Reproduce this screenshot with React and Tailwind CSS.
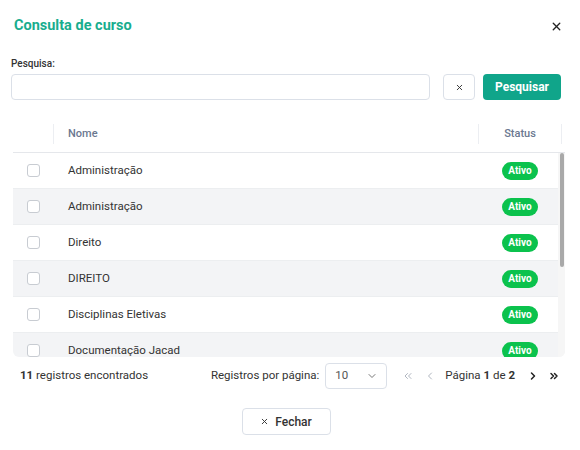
import React from "react";
import { X, ChevronDown, ChevronLeft, ChevronRight, ChevronsLeft, ChevronsRight } from "lucide-react";

const cursos = [
  "Administração",
  "Administração",
  "Direito",
  "DIREITO",
  "Disciplinas Eletivas",
  "Documentação Jacad",
];

const App = () => {
  return (
    <div className="w-[580px] h-[450px] bg-white font-['Roboto',sans-serif] text-[#333]">
      {/* Header */}
      <div className="flex items-center justify-between h-[20px] mt-[16px] pl-[14px] pr-[17px]">
        <h1 className="text-[14.5px] font-bold text-[#18ad8e] leading-[20px]">Consulta de curso</h1>
        <X className="w-[13px] h-[13px] text-[#222]" strokeWidth={2.5} />
      </div>

      {/* Search */}
      <div className="pl-[11px] pr-[19px] mt-[22px]">
        <label className="block text-[10px] leading-[12px] font-medium text-[#333]">Pesquisa:</label>
        <div className="flex items-center mt-[4px] gap-[8px]">
          <input className="flex-1 h-[26px] border border-[#dbe0e8] rounded-[4px] outline-none mr-[5px]" />
          <button className="w-[32px] h-[26px] border border-[#dbe0e8] rounded-[4px] flex items-center justify-center">
            <X className="w-[9px] h-[9px] text-[#333]" strokeWidth={2.5} />
          </button>
          <button className="w-[78px] h-[26px] bg-[#10a58a] rounded-[4px] text-white text-[12px] font-bold">
            Pesquisar
          </button>
        </div>
      </div>

      {/* Table */}
      <div className="mx-[13px] mt-[16px] w-[552px]">
        <div className="flex h-[37px] border-b border-[#e5e7eb] text-[11px] font-medium text-[#6b7890]">
          <div className="w-[41px] flex items-center justify-end">
            <div className="w-px h-[20px] bg-[#eceef2]" />
          </div>
          <div className="flex-1 flex items-center pl-[14px]">Nome</div>
          <div className="w-px h-[20px] bg-[#eceef2] self-center" />
          <div className="w-[82px] flex items-center justify-center">Status</div>
          <div className="w-px h-[20px] bg-[#eceef2] self-center" />
          <div className="w-[3px]" />
        </div>

        <div className="relative h-[204px] overflow-hidden rounded-b-[6px]">
          {cursos.map((nome, i) => (
            <div
              key={i}
              className={`flex h-[36px] items-center border-b border-[#eceef0] pr-[7px] ${
                i % 2 === 1 ? "bg-[#f3f4f6]" : "bg-white"
              }`}
            >
              <div className="w-[41px] flex justify-center">
                <div className="w-[13px] h-[13px] border border-[#c8ccd2] rounded-[3px] bg-white" />
              </div>
              <div className="flex-1 pl-[14px] text-[11.5px] text-[#333]">{nome}</div>
              <div className="w-[76px] flex justify-center">
                <span className="h-[18px] px-[6px] rounded-full bg-[#0bc24d] text-white text-[10px] font-bold leading-[18px]">
                  Ativo
                </span>
              </div>
            </div>
          ))}
          {/* scrollbar */}
          <div className="absolute right-0 top-0 w-[7px] h-full bg-[#f6f6f6]">
            <div className="mx-auto w-[4px] h-[114px] rounded-full bg-[#a9a9a9]" />
          </div>
        </div>
      </div>

      {/* Pagination */}
      <div className="flex items-center h-[26px] mt-[6px] pl-[20px] pr-[20px] text-[11.5px] text-[#333]">
        <span>
          <b className="font-bold">11</b> registros encontrados
        </span>
        <span className="ml-auto">Registros por página:</span>
        <div className="ml-[6px] w-[62px] h-[26px] border border-[#dbe0e8] rounded-[4px] flex items-center justify-between pl-[9px] pr-[8px] text-[#555]">
          <span>10</span>
          <ChevronDown className="w-[12px] h-[12px] text-[#777]" />
        </div>
        <ChevronsLeft className="ml-[15px] w-[12px] h-[12px] text-[#b0b6c0]" />
        <ChevronLeft className="ml-[10px] w-[12px] h-[12px] text-[#b0b6c0]" />
        <span className="ml-[9px]">
          Página <b className="font-bold">1</b> de <b className="font-bold">2</b>
        </span>
        <ChevronRight className="ml-[12px] w-[12px] h-[12px] text-[#222]" strokeWidth={3} />
        <ChevronsRight className="ml-[9px] w-[12px] h-[12px] text-[#222]" strokeWidth={3} />
      </div>

      {/* Footer */}
      <div className="flex justify-center mt-[19px]">
        <button className="w-[89px] h-[27px] border border-[#dbe0e8] rounded-[4px] flex items-center justify-center gap-[6px] text-[12px] font-medium text-[#333] mr-[8px]">
          <X className="w-[9px] h-[9px]" strokeWidth={2.5} />
          Fechar
        </button>
      </div>
    </div>
  );
};

export default App;
